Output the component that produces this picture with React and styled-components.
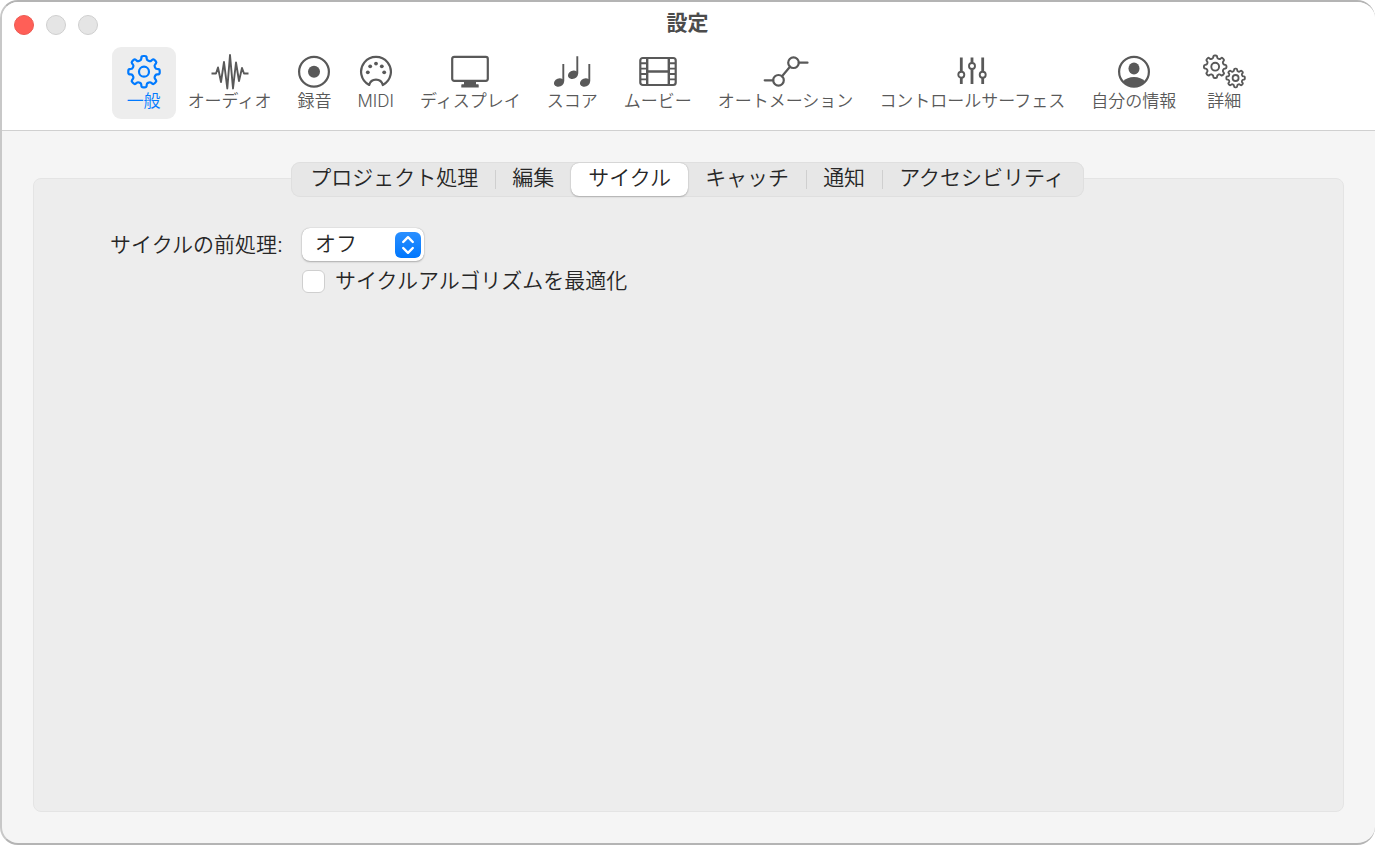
import React, { useState } from "react";
import styled, { createGlobalStyle, css } from "styled-components";

// Builds a closed gear outline, with the corners of each tooth rounded off
const gearPath = (cx, cy, outer, inner, teeth = 8) => {
  const step = 360 / teeth;
  const points = [];
  for (let i = 0; i < teeth; i++) {
    const a = i * step - 90;
    [
      [outer, a - step * 0.2],
      [outer, a + step * 0.2],
      [inner, a + step * 0.3],
      [inner, a + step * 0.7],
    ].forEach(([r, deg]) => {
      const rad = (deg * Math.PI) / 180;
      points.push([cx + r * Math.cos(rad), cy + r * Math.sin(rad)]);
    });
  }
  const mix = (p, q, t) =>
    [p[0] + (q[0] - p[0]) * t, p[1] + (q[1] - p[1]) * t]
      .map((n) => n.toFixed(2))
      .join(" ");
  return (
    points
      .map((p, i) => {
        const prev = points[(i + points.length - 1) % points.length];
        const next = points[(i + 1) % points.length];
        return `${i ? "L" : "M"}${mix(p, prev, 0.35)}Q${mix(p, p, 0)} ${mix(p, next, 0.35)}`;
      })
      .join("") + "Z"
  );
};

const GeneralIcon = () => (
  <Icon width="36" height="38" viewBox="0 0 36 38">
    <path d={gearPath(18, 18.7, 15.9, 12)} />
    <circle cx="18" cy="18.7" r="5" />
  </Icon>
);

const AudioIcon = () => (
  <Icon width="40" height="38" viewBox="0 0 40 38">
    <path
      d="M1.5 20.5H6L8 14.5L11 29L14 9L17.3 35.5L20 2L23 35.5L26 9.5L29 28L32 15L34 20.5H38.5"
      strokeWidth="1.9"
    />
  </Icon>
);

const RecordIcon = () => (
  <Icon width="34" height="38" viewBox="0 0 34 38">
    <circle cx="17" cy="18.7" r="14.9" />
    <Solid as="circle" cx="17" cy="18.7" r="6" />
  </Icon>
);

const MidiIcon = () => (
  <Icon width="34" height="38" viewBox="0 0 34 38">
    <path d="M10.2 32A14.9 14.9 0 1 1 23.8 32A7 7 0 0 0 10.2 32Z" />
    {[
      [8.8, 19.3],
      [11.2, 13.3],
      [17, 10.6],
      [22.8, 13.3],
      [25.2, 19.3],
    ].map(([x, y]) => (
      <Solid as="circle" key={x} cx={x} cy={y} r="1.9" />
    ))}
  </Icon>
);

const DisplayIcon = () => (
  <Icon width="40" height="38" viewBox="0 0 40 38">
    <rect x="2.2" y="3.8" width="35.6" height="24" rx="2" />
    <Solid d="M14 28H26V31.3H28Q28.7 31.3 28.7 32V34.5H11.3V32Q11.3 31.3 12 31.3H14Z" />
  </Icon>
);

const Note = ({ x, y }) => (
  <>
    <Solid
      as="ellipse"
      cx={x}
      cy={y}
      rx="5.2"
      ry="4.1"
      transform={`rotate(-22 ${x} ${y})`}
    />
    <path d={`M${x + 4.3} ${y - 1}V${y - 18.5}`} strokeWidth="1.9" />
  </>
);

const ScoreIcon = () => (
  <Icon width="40" height="38" viewBox="0 0 40 38">
    <Note x={7} y={29.5} />
    <Note x={21} y={21.7} />
    <Note x={33} y={29.5} />
  </Icon>
);

const MovieIcon = () => (
  <Icon width="40" height="38" viewBox="0 0 40 38">
    <rect x="2.3" y="5" width="35.4" height="27" rx="2.5" />
    <path d="M9.2 5V32M30.8 5V32M9.2 18.5H30.8" strokeWidth="2.4" />
    <path
      d="M2.3 10.2H9.2M2.3 15.6H9.2M2.3 21H9.2M2.3 26.4H9.2M30.8 10.2H37.7M30.8 15.6H37.7M30.8 21H37.7M30.8 26.4H37.7"
      strokeWidth="1.9"
    />
  </Icon>
);

const AutomationIcon = () => (
  <Icon width="48" height="38" viewBox="0 0 48 38">
    <circle cx="16.5" cy="27.3" r="5.3" />
    <circle cx="31.5" cy="9.7" r="5.3" />
    <path d="M2.7 27.3H11.2M20 23.3L28 13.7M36.8 9.7H45.5" />
  </Icon>
);

const SurfaceIcon = () => (
  <Icon width="32" height="38" viewBox="0 0 32 38">
    <path
      d="M5.3 4.5V18.5M5.3 25V31M16 4.5V9.7M16 16.3V31M26.7 4.5V18.5M26.7 25V31"
      strokeWidth="2.8"
    />
    <circle cx="5.3" cy="21.7" r="3" strokeWidth="1.9" />
    <circle cx="16" cy="13" r="3" strokeWidth="1.9" />
    <circle cx="26.7" cy="21.7" r="3" strokeWidth="1.9" />
  </Icon>
);

const PersonIcon = () => (
  <Icon width="34" height="38" viewBox="0 0 34 38">
    <circle cx="17" cy="18.7" r="14.9" />
    <Solid as="ellipse" cx="17" cy="15.5" rx="5.5" ry="6" />
    <Solid d="M5.8 28.5C8.5 25.5 12.5 24 17 24S25.5 25.5 28.2 28.5C25.5 32 21.5 34 17 34S8.5 32 5.8 28.5Z" />
  </Icon>
);

const AdvancedIcon = () => (
  <Icon width="44" height="38" viewBox="0 0 44 38">
    <path d={gearPath(13.2, 13.7, 11.4, 8.7)} strokeWidth="1.9" />
    <circle cx="13.2" cy="13.7" r="3.9" strokeWidth="1.9" />
    <path d={gearPath(33.6, 25, 9.4, 7.1)} strokeWidth="1.8" />
    <circle cx="33.6" cy="25" r="3" strokeWidth="1.8" />
  </Icon>
);

const toolbarItems = [
  { label: "一般", icon: <GeneralIcon /> },
  { label: "オーディオ", icon: <AudioIcon /> },
  { label: "録音", icon: <RecordIcon /> },
  { label: "MIDI", icon: <MidiIcon /> },
  { label: "ディスプレイ", icon: <DisplayIcon /> },
  { label: "スコア", icon: <ScoreIcon /> },
  { label: "ムービー", icon: <MovieIcon /> },
  { label: "オートメーション", icon: <AutomationIcon /> },
  { label: "コントロールサーフェス", icon: <SurfaceIcon /> },
  { label: "自分の情報", icon: <PersonIcon /> },
  { label: "詳細", icon: <AdvancedIcon /> },
];

const tabs = [
  "プロジェクト処理",
  "編集",
  "サイクル",
  "キャッチ",
  "通知",
  "アクセシビリティ",
];

const App = () => {
  const [section, setSection] = useState("一般");
  const [tab, setTab] = useState("サイクル");
  const [optimize, setOptimize] = useState(false);
  const current = tabs.indexOf(tab);

  return (
    <Window>
      <GlobalStyle />
      <Header>
        <TitleBar>
          <Lights>
            <Light $close aria-label="閉じる" />
            <Light aria-label="しまう" />
            <Light aria-label="拡大/縮小" />
          </Lights>
          <Title>設定</Title>
        </TitleBar>
        <Toolbar>
          {toolbarItems.map(({ label, icon }) => (
            <ToolbarButton
              key={label}
              $active={label === section}
              onClick={() => setSection(label)}
            >
              {icon}
              <span>{label}</span>
            </ToolbarButton>
          ))}
        </Toolbar>
      </Header>
      <Content>
        <Tabs role="tablist">
          {tabs.map((name, i) => (
            <Tab
              key={name}
              role="tab"
              aria-selected={i === current}
              $active={i === current}
              $divider={i > 0 && i !== current && i !== current + 1}
              onClick={() => setTab(name)}
            >
              {name}
            </Tab>
          ))}
        </Tabs>
        <Panel>
          <Form>
            <Label htmlFor="preprocess">サイクルの前処理:</Label>
            <SelectBox>
              <Select id="preprocess" defaultValue="オフ">
                <option>オフ</option>
              </Select>
              <Stepper>
                <svg width="14" height="20" viewBox="0 0 14 20">
                  <path d="M2.2 7L7 2.2L11.8 7M2.2 13L7 17.8L11.8 13" />
                </svg>
              </Stepper>
            </SelectBox>
            <CheckRow>
              <Checkbox
                id="optimize"
                type="checkbox"
                checked={optimize}
                onChange={(e) => setOptimize(e.target.checked)}
              />
              <Label htmlFor="optimize">サイクルアルゴリズムを最適化</Label>
            </CheckRow>
          </Form>
        </Panel>
      </Content>
    </Window>
  );
};

export default App;

const GlobalStyle = createGlobalStyle`
  * {
    box-sizing: border-box;
  }
  body {
    margin: 0;
    background: #fff;
    color: #262626;
    font-family: Inter, "Noto Sans CJK JP", sans-serif;
    font-weight: 350;
  }
  button,
  select {
    margin: 0;
    border: 0;
    font-family: inherit;
    font-weight: inherit;
    color: inherit;
  }
`;

const Window = styled.div`
  display: flex;
  flex-direction: column;
  min-height: calc(100vh - 1px);
  overflow: hidden;
  background: #f5f5f5;
  border: 2px solid #b4b4b4;
  border-left-color: #c8c8c8;
  border-right-width: 0;
  border-radius: 18px;
`;

const Header = styled.header`
  background: #fff;
  border-bottom: 1px solid #d0d0d0;
  padding-bottom: 12px;
`;

const TitleBar = styled.div`
  display: grid;
  grid-template-columns: 1fr auto 1fr;
  align-items: center;
  height: 45px;
  padding-right: 2px;
`;

const Lights = styled.div`
  display: flex;
  gap: 12px;
  padding-left: 12px;
`;

const Light = styled.button`
  width: 20px;
  height: 20px;
  padding: 0;
  border: 1px solid ${(props) => (props.$close ? "#ec5a52" : "#cfcfcf")};
  border-radius: 50%;
  background: ${(props) => (props.$close ? "#ff5f57" : "#e5e5e5")};
`;

const Title = styled.h1`
  margin: 0;
  padding-bottom: 3px;
  font-size: 21px;
  line-height: 30px;
  font-weight: 700;
  color: #4c4c4c;
`;

const Toolbar = styled.nav`
  display: flex;
  justify-content: center;
  padding: 1px 5px 0 0;
`;

const Icon = styled.svg`
  display: block;
  fill: none;
  stroke: currentColor;
  stroke-width: 2.2px;
  stroke-linejoin: round;
  stroke-linecap: round;

  [stroke-width] {
    stroke-linecap: butt;
  }
`;

const Solid = styled.path`
  fill: currentColor;
  stroke: none;
`;

const ToolbarButton = styled.button`
  display: flex;
  flex-direction: column;
  align-items: center;
  height: 70px;
  padding: 5px 13px 0;
  border-radius: 8px;
  background: transparent;
  color: #595959;
  font-size: 17px;
  line-height: 20px;
  white-space: nowrap;

  ${(props) =>
    props.$active &&
    css`
      background: #ededed;
      box-shadow: 0 0 0 1px #ededed;
      color: #007aff;
    `}
`;

const Content = styled.main`
  display: flex;
  flex: 1;
  flex-direction: column;
  padding: 31px;
`;

const Tabs = styled.div`
  display: flex;
  align-self: center;
  z-index: 1;
  height: 35px;
  margin: 0 2px -19px 0;
  padding: 0 2px;
  border-radius: 9px;
  background: #e7e7e7;
  box-shadow: inset 0 0 0 1px #dfdfdf;
`;

const Tab = styled.button`
  margin: 1px 0;
  padding: 0 17px 4px;
  background: transparent;
  font-size: 21px;
  line-height: 28px;
  white-space: nowrap;

  ${(props) =>
    props.$divider &&
    css`
      background: linear-gradient(#cfcfcf, #cfcfcf) left center / 1px 19px
        no-repeat;
    `}

  ${(props) =>
    props.$active &&
    css`
      border-radius: 8px;
      background: #fff;
      box-shadow: 0 0 1px rgba(0, 0, 0, 0.3), 0 1px 2px rgba(0, 0, 0, 0.2);
    `}
`;

const Panel = styled.section`
  flex: 1;
  padding: 49px 0;
  border: 1px solid #e4e4e4;
  border-radius: 8px;
  background: #ededed;
`;

const Form = styled.div`
  display: grid;
  grid-template-columns: 249px auto;
  justify-content: start;
  align-items: center;
  gap: 4px 19px;
`;

const Label = styled.label`
  padding-bottom: 1px;
  font-size: 21px;
  line-height: 31px;
  white-space: nowrap;
  text-align: right;
`;

const SelectBox = styled.div`
  position: relative;
  width: 122px;
`;

const Select = styled.select`
  display: block;
  width: 100%;
  height: 33px;
  padding: 0 30px 2px 13px;
  appearance: none;
  border-radius: 8px;
  background: #fff;
  box-shadow: 0 0 1px rgba(0, 0, 0, 0.35), 0 1px 2px rgba(0, 0, 0, 0.25);
  font-size: 21px;
`;

const Stepper = styled.span`
  position: absolute;
  top: 4px;
  right: 3px;
  display: grid;
  place-items: center;
  width: 26px;
  height: 26px;
  border-radius: 6px;
  background: linear-gradient(#2a8fff, #0077fd);
  pointer-events: none;

  svg {
    fill: none;
    stroke: #fff;
    stroke-width: 2.4px;
    stroke-linecap: round;
    stroke-linejoin: round;
  }
`;

const CheckRow = styled.div`
  grid-column: 2;
  display: flex;
  align-items: center;
  gap: 10px;
`;

const Checkbox = styled.input`
  width: 23px;
  height: 23px;
  margin: 0;
  appearance: none;
  border: 1px solid #cfcfcf;
  border-radius: 6px;
  background: #fff;

  &:checked {
    border-color: #007aff;
    background: #007aff;
  }
`;
